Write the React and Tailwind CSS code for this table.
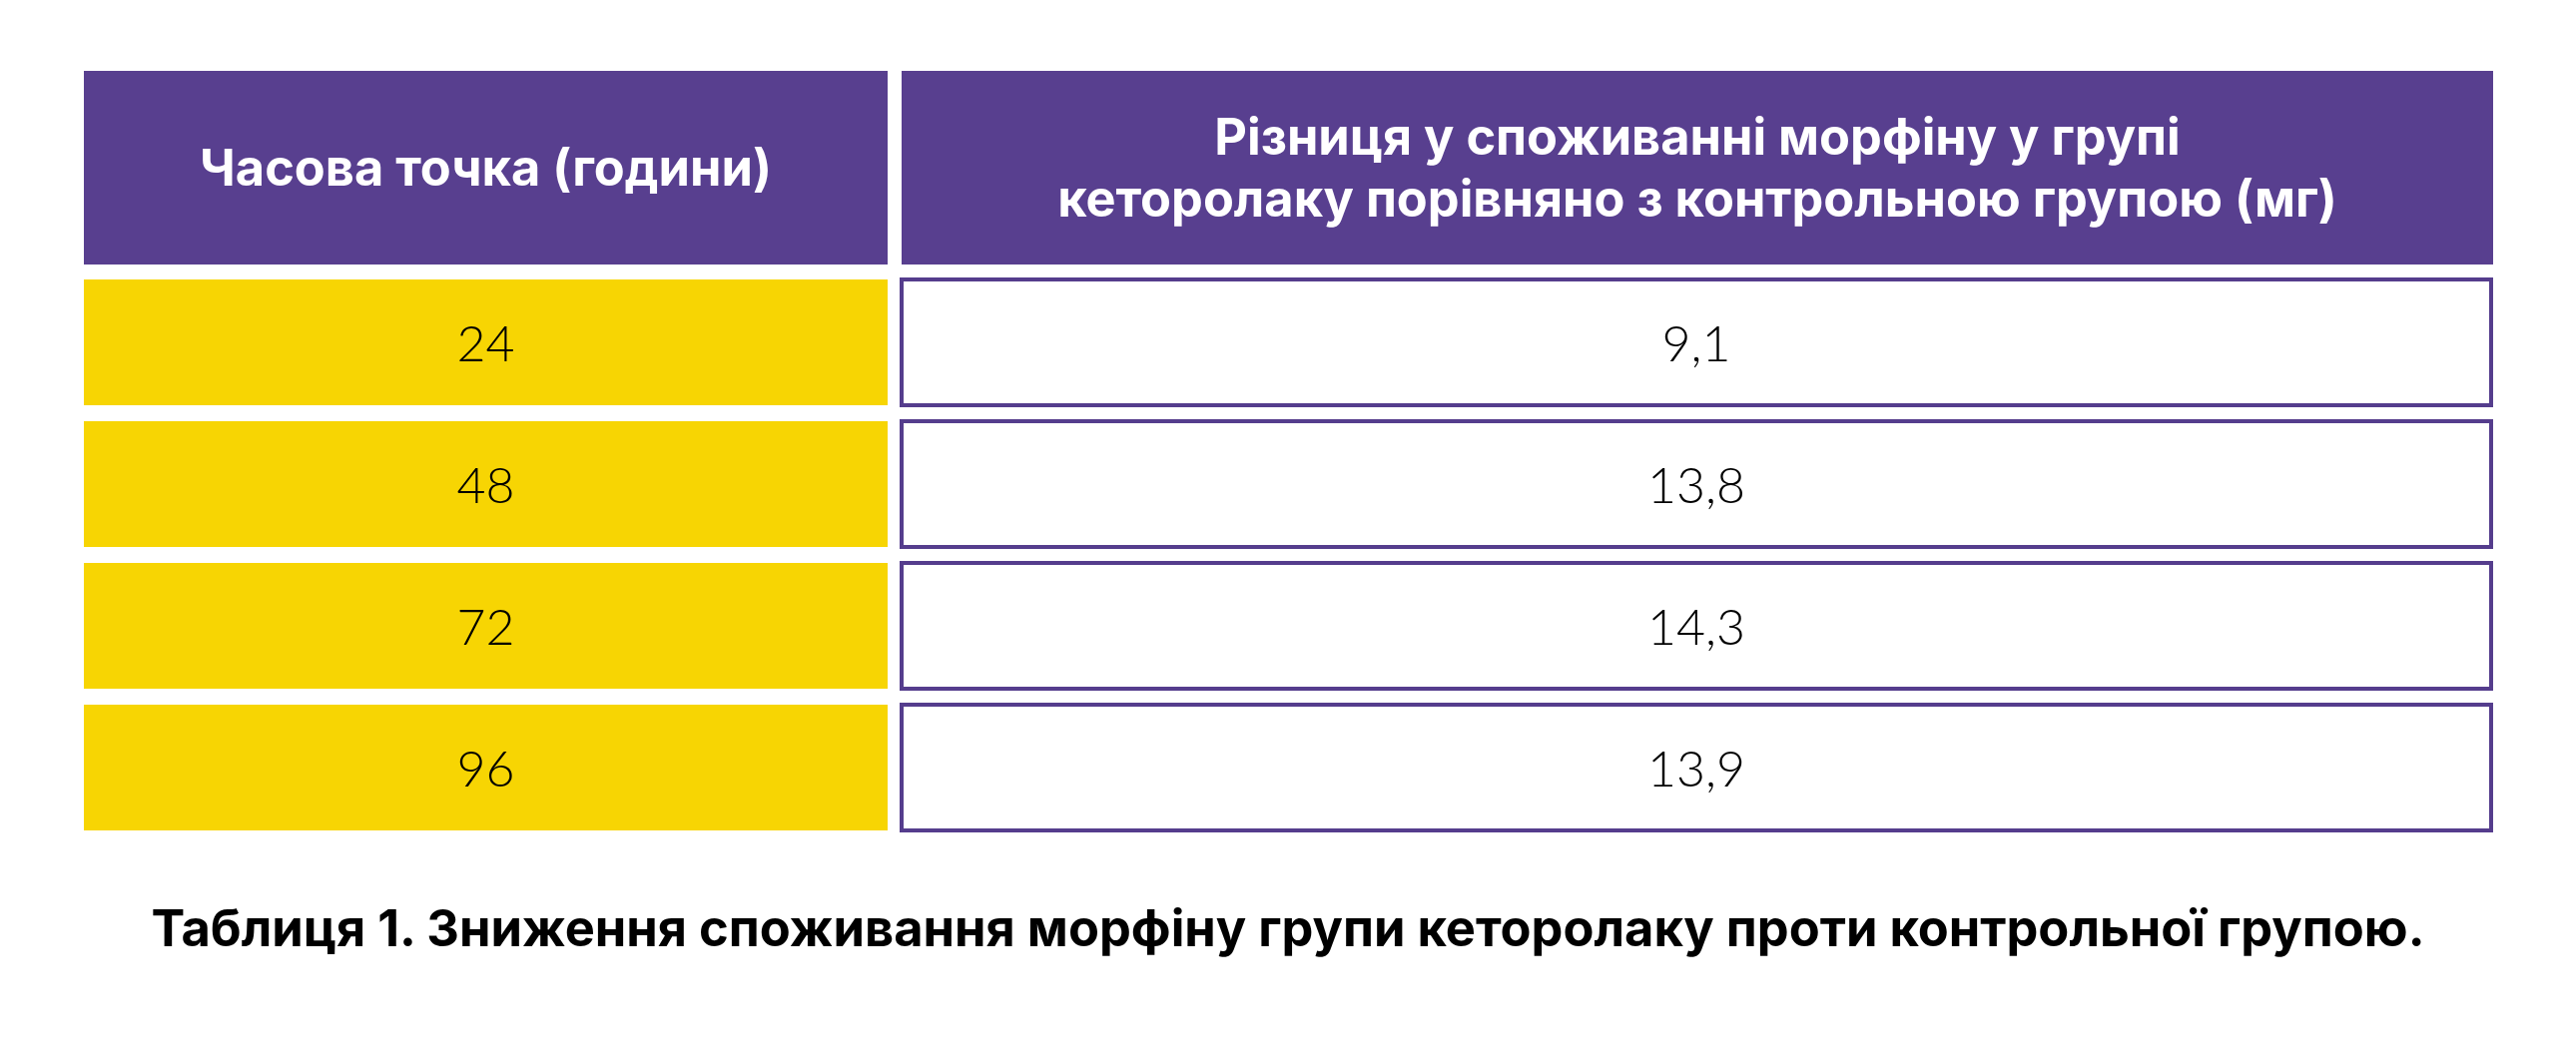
import React from "react";

const rows = [
  { hour: "24", diff: "9,1" },
  { hour: "48", diff: "13,8" },
  { hour: "72", diff: "14,3" },
  { hour: "96", diff: "13,9" },
];

const App = () => {
  return (
    <main
      className="w-[2580px] h-[1063px] bg-white pt-[71px] px-[84px]"
      style={{ fontFamily: "Inter, 'Noto Sans', sans-serif" }}
    >
      {/* TABLE */}
      <div className="w-[2413px] flex flex-col">
        <div className="flex gap-[14px] h-[194px]">
          <div className="w-[805px] bg-[#583f8f] flex items-center justify-center text-white font-bold text-[50.5px]">
            Часова точка (години)
          </div>
          <div className="flex-1 bg-[#583f8f] flex items-center justify-center text-center text-white font-bold text-[50.5px] leading-[62px]">
            Різниця у споживанні морфіну у групі
            <br />
            кеторолаку порівняно з контрольною групою (мг)
          </div>
        </div>

        <div className="flex flex-col gap-[12px] mt-[13px]">
          {rows.map((r) => (
            <div key={r.hour} className="flex gap-[12px] h-[130px] font-['Lato'] font-light text-[50px] text-black">
              <div className="w-[805px] my-[2px] bg-[#f7d503] flex items-center justify-center">
                {r.hour}
              </div>
              <div className="flex-1 border-4 border-[#553d8d] bg-white flex items-center justify-center">
                {r.diff}
              </div>
            </div>
          ))}
        </div>
      </div>

      {/* CAPTION */}
      <p className="mt-[66px] -mx-[84px] text-center text-black font-bold text-[50.6px] leading-[60px]">
        Таблиця 1. Зниження споживання морфіну групи кеторолаку проти контрольної групою.
      </p>
    </main>
  );
};

export default App;
